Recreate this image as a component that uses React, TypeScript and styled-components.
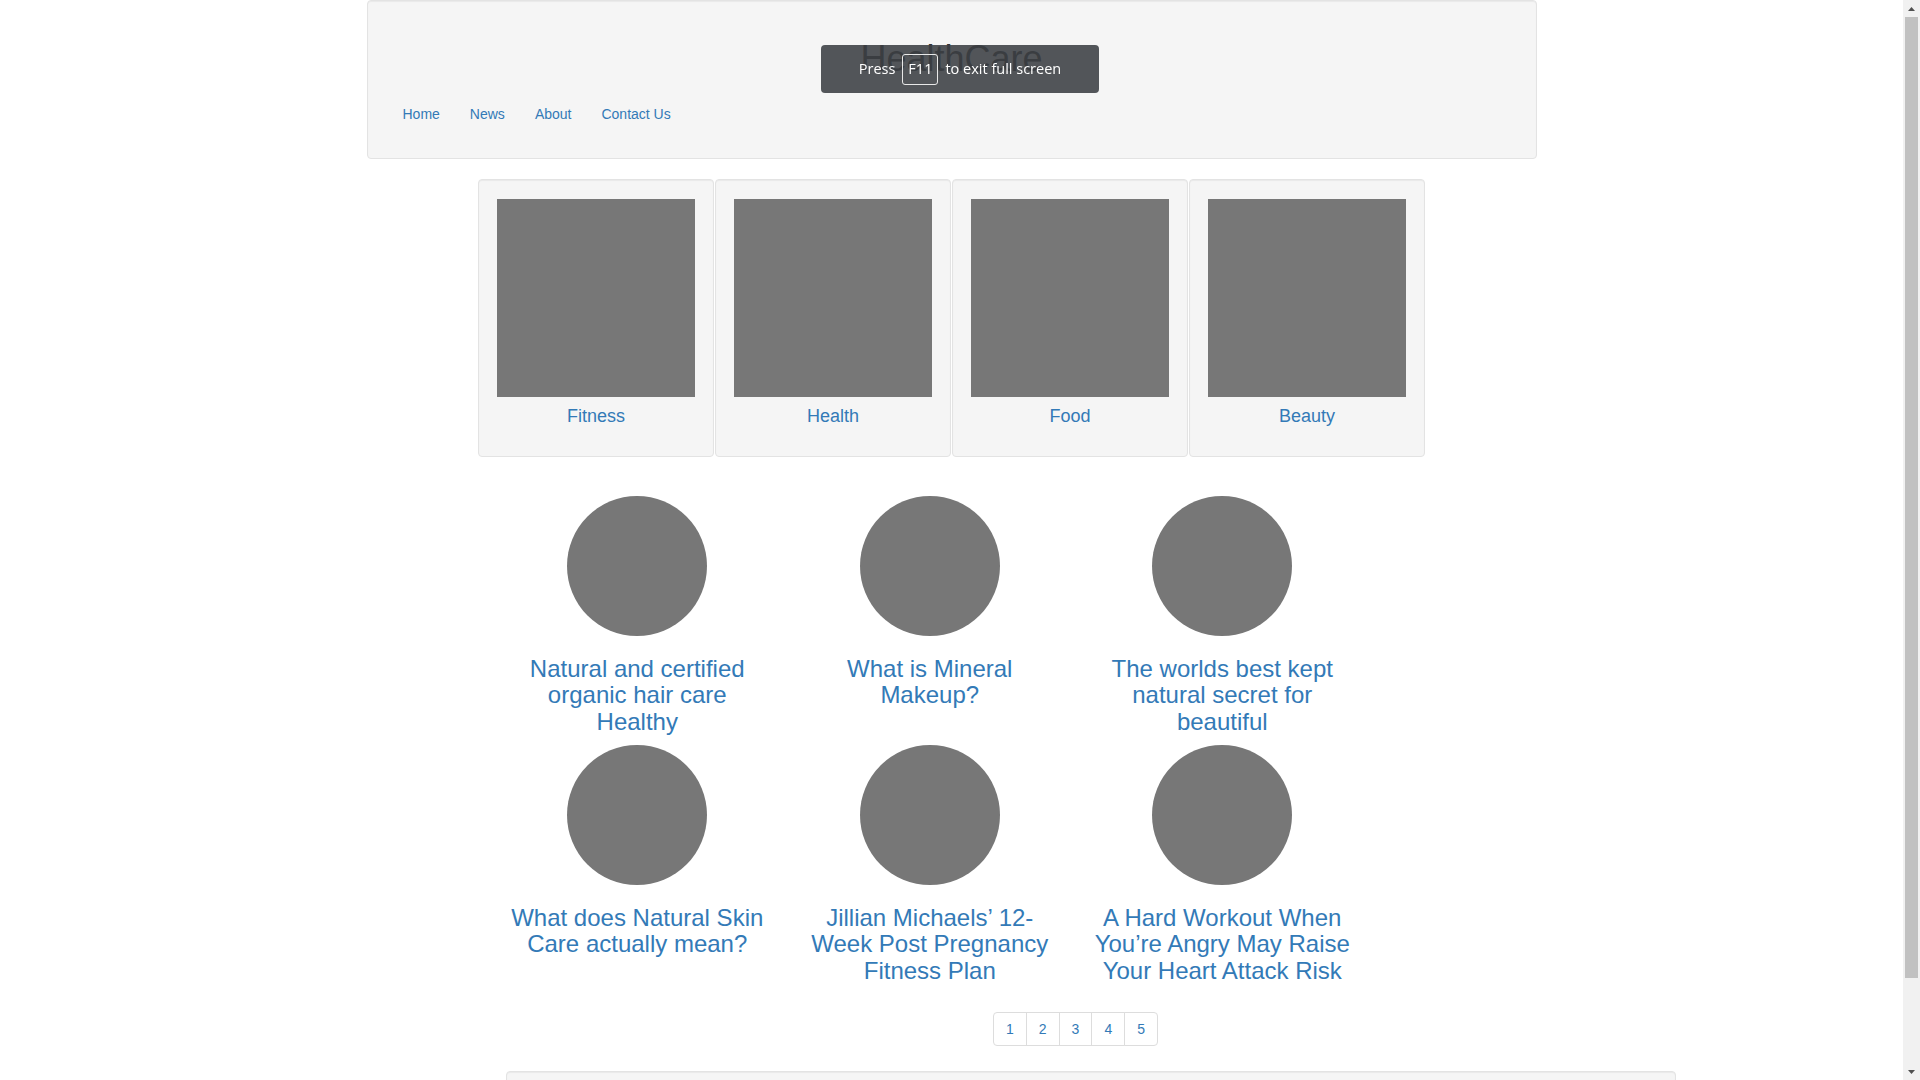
import React from 'react';
import styled, { createGlobalStyle } from 'styled-components';

const GlobalStyle = createGlobalStyle`
  html, body {
    margin: 0;
    padding: 0;
    background: #fff;
  }
  body {
    font-family: 'Liberation Sans', Arial, Helvetica, sans-serif;
    font-size: 14px;
    line-height: 1.42857;
    color: #333;
  }
  * {
    box-sizing: border-box;
  }
`;

const Page = styled.div`
  width: 1903px;
  position: relative;
`;

const Header = styled.header`
  width: 1170px;
  margin: 0 auto;
  background: #f5f5f5;
  border: 1px solid #e3e3e3;
  border-radius: 4px;
  box-shadow: inset 0 1px 1px rgba(0, 0, 0, 0.05);
  padding: 15px 0 19px;
`;

const Title = styled.h1`
  margin: 23px 0 10px;
  font-size: 36px;
  line-height: 40px;
  font-weight: 500;
  text-align: center;
  color: #333;
`;

const Nav = styled.ul`
  list-style: none;
  margin: 0;
  padding: 0 0 0 20px;
  display: flex;
`;

const NavLink = styled.a`
  display: block;
  padding: 15px;
  line-height: 20px;
  font-size: 14px;
  color: #337ab7;
  text-decoration: none;
`;

const CategoryRow = styled.section`
  display: flex;
  justify-content: center;
  gap: 1px;
  margin-top: 20px;
`;

const CategoryCard = styled.div`
  width: 236px;
  background: #f5f5f5;
  border: 1px solid #e3e3e3;
  border-radius: 4px;
  box-shadow: inset 0 1px 1px rgba(0, 0, 0, 0.05);
  padding: 19px 18px;
  text-align: center;
`;

const Thumb = styled.div`
  width: 198px;
  height: 198px;
  background: #777;
`;

const CategoryName = styled.h4`
  margin: 10px 0;
  font-size: 18px;
  line-height: 19.8px;
  font-weight: 500;
  color: #337ab7;
`;

const ArticleGrid = styled.section`
  width: 877.5px;
  margin: 39px 0 0 491px;
  display: grid;
  grid-template-columns: repeat(3, 1fr);
`;

const Article = styled.div`
  padding: 0 15px;
  text-align: center;
`;

const Avatar = styled.div`
  width: 140px;
  height: 140px;
  border-radius: 50%;
  background: #777;
  margin: 0 auto;
`;

const ArticleTitle = styled.h3`
  margin: 20px 0 10px;
  font-size: 24px;
  line-height: 1.1;
  font-weight: 500;
  color: #337ab7;
`;

const Pager = styled.ul`
  list-style: none;
  display: flex;
  margin: 18px 0 25px 993px;
  padding: 0;
`;

const PageLink = styled.a<{ $first?: boolean; $last?: boolean }>`
  display: block;
  padding: 6px 12px;
  line-height: 20px;
  font-size: 14px;
  color: #337ab7;
  text-decoration: none;
  background: #fff;
  border: 1px solid #ddd;
  margin-left: ${(p) => (p.$first ? '0' : '-1px')};
  border-radius: ${(p) =>
    p.$first ? '4px 0 0 4px' : p.$last ? '0 4px 4px 0' : '0'};
`;

const Footer = styled.footer`
  width: 1170px;
  height: 84px;
  margin: 0 0 20px 506px;
  background: #f5f5f5;
  border: 1px solid #e3e3e3;
  border-radius: 4px;
  box-shadow: inset 0 1px 1px rgba(0, 0, 0, 0.05);
`;

const FullscreenToast = styled.div`
  position: fixed;
  top: 45px;
  left: 821px;
  width: 278px;
  height: 48px;
  background: rgba(59, 63, 67, 0.88);
  border-radius: 4px;
  display: flex;
  align-items: center;
  justify-content: center;
  gap: 7px;
  font-family: 'Open Sans', 'Noto Sans', sans-serif;
  font-size: 14.5px;
  color: #fff;
`;

const KeyCap = styled.span`
  display: inline-flex;
  align-items: center;
  justify-content: center;
  width: 36px;
  height: 31px;
  border: 1px solid #e8e8e8;
  border-radius: 3px;
`;

const Scrollbar = styled.div`
  position: fixed;
  top: 0;
  right: 0;
  width: 17px;
  height: 100vh;
  background: #f1f1f1;
  display: flex;
  flex-direction: column;
  align-items: center;
  justify-content: space-between;
`;

const ScrollArrow = styled.div`
  height: 17px;
  display: flex;
  align-items: center;
  justify-content: center;
`;

const ScrollThumb = styled.div`
  width: 13px;
  flex: 0 0 961px;
  background: #c1c1c1;
  margin-bottom: auto;
`;

const categories = ['Fitness', 'Health', 'Food', 'Beauty'];

const articles = [
  'Natural and certified organic hair care Healthy',
  'What is Mineral Makeup?',
  'The worlds best kept natural secret for beautiful',
  'What does Natural Skin Care actually mean?',
  'Jillian Michaels\u2019 12-Week Post Pregnancy Fitness Plan',
  'A Hard Workout When You\u2019re Angry May Raise Your Heart Attack Risk',
];

const pages = [1, 2, 3, 4, 5];

const App = () => {
  return (
    <Page>
      <GlobalStyle />
      <Header>
        <Title>HealthCare</Title>
        <Nav>
          {['Home', 'News', 'About', 'Contact Us'].map((item) => (
            <li key={item}>
              <NavLink href="#">{item}</NavLink>
            </li>
          ))}
        </Nav>
      </Header>

      <CategoryRow>
        {categories.map((name) => (
          <CategoryCard key={name}>
            <Thumb />
            <CategoryName>{name}</CategoryName>
          </CategoryCard>
        ))}
      </CategoryRow>

      <ArticleGrid>
        {articles.map((title) => (
          <Article key={title}>
            <Avatar />
            <ArticleTitle>{title}</ArticleTitle>
          </Article>
        ))}
      </ArticleGrid>

      <Pager>
        {pages.map((n, i) => (
          <li key={n}>
            <PageLink href="#" $first={i === 0} $last={i === pages.length - 1}>
              {n}
            </PageLink>
          </li>
        ))}
      </Pager>

      <Footer />

      <FullscreenToast>
        <span>Press</span>
        <KeyCap>F11</KeyCap>
        <span>to exit full screen</span>
      </FullscreenToast>

      <Scrollbar>
        <ScrollArrow>
          <svg width="7" height="4" viewBox="0 0 7 4">
            <path d="M0 4 L3.5 0 L7 4 Z" fill="#505050" />
          </svg>
        </ScrollArrow>
        <ScrollThumb />
        <ScrollArrow>
          <svg width="7" height="4" viewBox="0 0 7 4">
            <path d="M0 0 L3.5 4 L7 0 Z" fill="#505050" />
          </svg>
        </ScrollArrow>
      </Scrollbar>
    </Page>
  );
};

export default App;
